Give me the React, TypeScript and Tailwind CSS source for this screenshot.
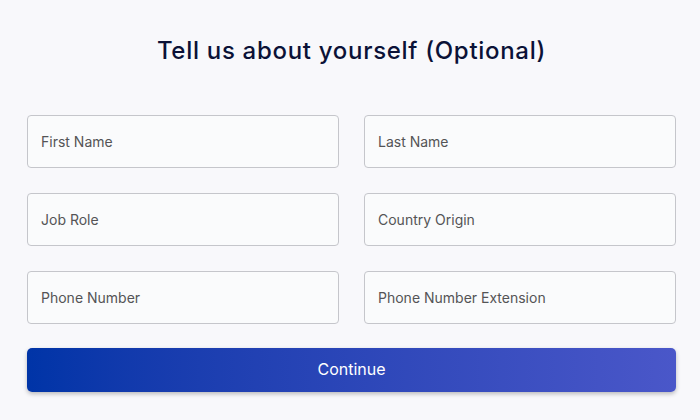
import React from 'react';

const fields = [
  'First Name',
  'Last Name',
  'Job Role',
  'Country Origin',
  'Phone Number',
  'Phone Number Extension',
];

const App: React.FC = () => {
  return (
    <div className="min-h-screen w-full bg-[#f8f8fb] font-['Inter',sans-serif]">
      <div className="pl-[27px] pr-[24px] pt-[35px]">
        {/* Title */}
        <h1 className="text-center text-[24px] font-medium leading-[32px] tracking-[0.7px] text-[#0b1237]">
          Tell us about yourself (Optional)
        </h1>

        {/* Fields */}
        <div className="mt-[48px] grid grid-cols-2 gap-x-[25px] gap-y-[25px]">
          {fields.map(f => (
            <input
              key={f}
              placeholder={f}
              className="h-[53px] w-full rounded-[4px] border border-[#c5c6cb] bg-[#fafbfc] px-[13px] text-[14px] text-[#555] placeholder:text-[#545456] outline-none"
            />
          ))}
        </div>

        {/* Continue */}
        <button className="mt-[24px] h-[44px] w-full rounded-[5px] bg-gradient-to-r from-[#0034a7] to-[#4a57c9] pb-[2px] text-[16px] text-white shadow-[0_2px_4px_rgba(0,0,0,0.25)]">
          Continue
        </button>
      </div>
    </div>
  );
};

export default App;
